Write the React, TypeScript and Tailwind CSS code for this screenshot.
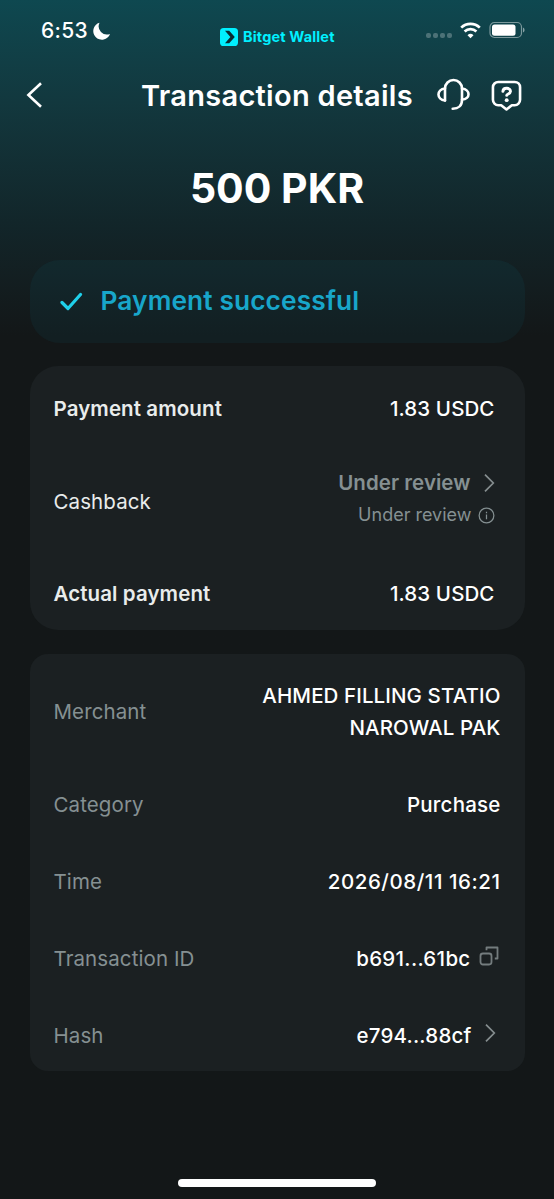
import type { ReactNode } from 'react';
import { clsx } from 'clsx';

function ChevronRight() {
  return (
    <svg viewBox="0 0 12 20" className="h-5 w-3 shrink-0" fill="none" stroke="#858d8f" strokeWidth="1.7">
      <path d="M2 1.600 10.300 10 2 18.400" />
    </svg>
  );
}

function StatusBar() {
  return (
    <div className="flex h-[62px] items-start justify-between pr-[29px] pl-[41px]">
      <div className="flex w-[179px] items-center gap-[5px] pt-[15px]">
        <span className="text-[21px] leading-[31px] font-medium tracking-[0.3px] text-white">6:53</span>
        <svg viewBox="0 0 18 18" className="h-[18px] w-[18px]" fill="#fff">
          <path d="M6.500.8A8.600 8.600 0 1 0 17 11.900 8.200 8.200 0 0 1 6.500.8Z" />
        </svg>
      </div>

      <div className="flex flex-1 items-center gap-[5px] pt-[25px]">
        <svg viewBox="0 0 18 18" className="h-[18px] w-[18px] shrink-0">
          <rect width="18" height="18" rx="3.600" fill="#00f0ff" />
          <path d="M5 2.800h4.200l5.600 6.200-5.600 6.200H5L10.400 9Z" fill="#0b2b31" />
        </svg>
        <span className="text-[14.500px] leading-6 font-bold tracking-[0.15px] whitespace-nowrap text-[#00f0ff]">Bitget Wallet</span>
      </div>

      <div className="flex items-start pt-[21px]">
        <div className="mt-[12px] flex gap-[2px]">
          {[0, 1, 2, 3].map((dot) => (
            <div key={dot} className="h-[5px] w-[5px] rounded-[2px] bg-white/25" />
          ))}
        </div>
        <svg viewBox="0 0 21 17" className="mt-[1px] ml-[8px] h-[17px] w-[21px]" fill="none" stroke="#fff" strokeWidth="2.700">
          <path d="M1.200 5.600a13.400 13.400 0 0 1 18.600 0" />
          <path d="M4.600 9.500a8.600 8.600 0 0 1 11.800 0" />
          <path d="m10.500 16.200 3-3a4.300 4.300 0 0 0-6 0Z" fill="#fff" stroke="none" />
        </svg>
        <svg viewBox="0 0 36 18" className="ml-[8px] h-[18px] w-[36px]">
          <rect x="1" y="1.500" width="31.500" height="15" rx="4.500" fill="none" stroke="#fff" strokeOpacity=".45" strokeWidth="1.200" />
          <rect x="3" y="3.500" width="23.500" height="11.200" rx="2.500" fill="#fff" />
          <path d="M34 6.500q1.600.6 1.600 2.500T34 11.500Z" fill="#fff" fillOpacity=".5" />
        </svg>
      </div>
    </div>
  );
}

function Header() {
  return (
    <header className="flex h-[66px] items-center pr-[31px] pl-[26px] text-white">
      <svg viewBox="0 0 17 26" className="h-[26px] w-[17px]" fill="none" stroke="#fff" strokeWidth="2.600">
        <path d="M15 1.200 2.400 13 15 24.800" />
      </svg>
      <h1 className="ml-[98px] w-[272px] pt-px text-[29px] leading-10 font-semibold tracking-[0.28px] whitespace-nowrap">Transaction details</h1>
      <svg viewBox="0 0 36 34" className="ml-[23px] h-[34px] w-[36px]" fill="none" stroke="#fff" strokeWidth="2.600" strokeLinecap="round" strokeLinejoin="round">
        <path d="M9 22.500V10.500a8.500 8.500 0 0 1 17 0V22c0 5.500-3.500 8.700-9.300 8.700" />
        <path d="M9 10.500c-8.700 1-8.700 11 0 12" />
        <path d="M26 10.500c8.700 1 8.700 10.500 0 11" />
      </svg>
      <svg viewBox="0 0 32 32" className="ml-[19px] h-[31px] w-[31px]" fill="none" stroke="#fff" strokeWidth="2.700" strokeLinecap="round" strokeLinejoin="round">
        <path d="M7.500 2h17A5.500 5.500 0 0 1 30 7.500v13a5.500 5.500 0 0 1-5.500 5.500h-3L16 30.400 10.500 26h-3A5.500 5.500 0 0 1 2 20.500v-13A5.500 5.500 0 0 1 7.500 2Z" />
        <path d="M12.300 11.700c.3-4.400 8-4.200 7.800.2-.1 2.500-3.900 2.400-3.900 4" strokeWidth="3" />
        <circle cx="16.200" cy="20.800" r="2" fill="#fff" stroke="none" />
      </svg>
    </header>
  );
}

interface RowProps {
  label: string;
  strong?: boolean;
  muted?: boolean;
  children: ReactNode;
}

function Row({ label, strong, muted, children }: RowProps) {
  return (
    <div className="flex items-center justify-between">
      <span
        className={clsx(
          'text-[20.500px]',
          strong ? 'font-semibold tracking-[0.1px]' : 'font-normal tracking-[0.1px]',
          muted ? 'text-[#859092]' : 'text-[#e9ecec]'
        )}
      >
        {label}
      </span>
      <div className="flex items-center text-[20.500px] font-medium tracking-[0.1px] text-white">{children}</div>
    </div>
  );
}

export default function App() {
  return (
    <div className="flex h-[1199px] w-[554px] flex-col bg-[#131718] bg-linear-to-b from-[#0e4850] from-0% via-[#122529] via-[19%] to-[#131718] to-[28%] font-['Inter',sans-serif] leading-8">
      <StatusBar />
      <Header />

      <p className="mt-[35px] text-center text-[41px] leading-[50px] font-bold text-white">500 PKR</p>

      <main className="mt-[47px] flex flex-col pr-[29.500px] pl-[29.500px]">
        <section className="flex h-[83px] items-center rounded-[30px] bg-[#12b0c8]/6 pl-[30px]">
          <svg viewBox="0 0 24 20" className="h-5 w-6" fill="none" stroke="#1fd0ea" strokeWidth="3.200" strokeLinecap="round" strokeLinejoin="round">
            <path d="m2 10.500 6 6L20.500 2.500" />
          </svg>
          <span className="mb-[2px] ml-[17px] text-[26.300px] font-semibold tracking-[0.1px] text-[#18a6ca]">Payment successful</span>
        </section>

        <section className="mt-[23px] h-[264px] rounded-[28px] bg-[#1b2022] pt-[27px] pr-[30px] pl-6">
          <Row label="Payment amount" strong>1.83 USDC</Row>
          <div className="pt-[41px] pb-[40px]">
            <Row label="Cashback">
              <div className="flex flex-col items-end pb-[7px] text-[#859092]">
                <div className="flex h-[33px] items-center gap-[12px] font-semibold tracking-[0.05px]">
                  Under review
                  <ChevronRight />
                </div>
                <div className="flex h-8 items-center gap-[6px] text-[18px] font-normal tracking-[0px]">
                  Under review
                  <svg viewBox="0 0 18 18" className="h-[17px] w-[17px]" fill="none" stroke="#859092" strokeWidth="1.300">
                    <circle cx="9" cy="9" r="7.800" />
                    <path d="M9 8v5M9 5v1.500" />
                  </svg>
                </div>
              </div>
            </Row>
          </div>
          <Row label="Actual payment" strong>1.83 USDC</Row>
        </section>

        <section className="mt-[24px] flex h-[417px] flex-col gap-[45px] rounded-[18px] bg-[#1b2022] pt-[26px] pr-6 pl-6">
          <Row label="Merchant" muted>
            <span className="text-right">
              AHMED FILLING STATIO
              <br />
              NAROWAL PAK
            </span>
          </Row>
          <Row label="Category" muted>
            <span className="tracking-[0.2px]">Purchase</span>
          </Row>
          <Row label="Time" muted>
            <span className="tracking-[0.55px]">2026/08/11 16:21</span>
          </Row>
          <Row label="Transaction ID" muted>
            <span className="tracking-[0.3px]">b691...61bc</span>
            <svg viewBox="0 0 20 20" className="mr-[2px] mb-[6px] ml-[8px] h-5 w-5" fill="none" stroke="#747c7e" strokeWidth="1.800">
              <rect x="1.500" y="7.500" width="11" height="11" rx="2.400" />
              <path d="M7.500 4.200V1.500h11v11h-2.700" strokeLinejoin="round" />
            </svg>
          </Row>
          <Row label="Hash" muted>
            <span className="mr-[12px] tracking-[0.2px]">e794...88cf</span>
            <div className="mr-[5px] mb-[6px] flex">
              <ChevronRight />
            </div>
          </Row>
        </section>
      </main>

      <div className="mt-auto mb-[12px] h-[8px] w-[198px] self-center rounded-full bg-white" />
    </div>
  );
}
